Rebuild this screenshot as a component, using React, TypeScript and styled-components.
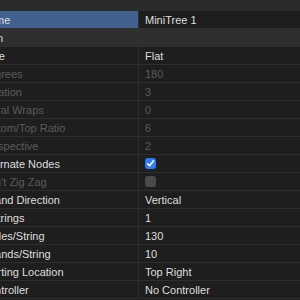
import React from "react";
import styled, { createGlobalStyle } from "styled-components";

const GlobalStyle = createGlobalStyle`
  html, body {
    margin: 0;
    padding: 0;
    background: #1e1e1e;
    overflow: hidden;
  }
  body {
    font-family: "Liberation Sans", Arial, sans-serif;
    font-size: 11px;
    -webkit-font-smoothing: antialiased;
  }
`;

type Prop = {
  label: string;
  value?: string;
  disabled?: boolean;
  check?: "on" | "off";
};

const props: Prop[] = [
  { label: "Type", value: "Flat" },
  { label: "Degrees", value: "180", disabled: true },
  { label: "Rotation", value: "3", disabled: true },
  { label: "Spiral Wraps", value: "0", disabled: true },
  { label: "Bottom/Top Ratio", value: "6", disabled: true },
  { label: "Perspective", value: "2", disabled: true },
  { label: "Alternate Nodes", check: "on" },
  { label: "Don't Zig Zag", check: "off", disabled: true },
  { label: "Strand Direction", value: "Vertical" },
  { label: "# Strings", value: "1" },
  { label: "Nodes/String", value: "130" },
  { label: "Strands/String", value: "10" },
  { label: "Starting Location", value: "Top Right" },
  { label: "Controller", value: "No Controller" },
];

const Grid = styled.div`
  width: 324px;
  margin-left: -24px;
  display: flex;
  flex-direction: column;
`;

const TopStrip = styled.div`
  height: 11px;
  background: #2b2b2b;
`;

const Row = styled.div`
  height: 18px;
  box-sizing: border-box;
  display: grid;
  grid-template-columns: 162px 1fr;
  border-bottom: 1px solid #2e2e2e;
`;

const Label = styled.div<{ $selected?: boolean; $disabled?: boolean }>`
  display: flex;
  align-items: center;
  padding-left: 5px;
  white-space: nowrap;
  overflow: hidden;
  background: ${(p) => (p.$selected ? "#41608e" : "#1e1e1e")};
  color: ${(p) => (p.$disabled ? "#5b5b5b" : "#dedede")};
`;

const Value = styled.div<{ $disabled?: boolean }>`
  display: flex;
  align-items: center;
  padding-left: 6px;
  border-left: 1px solid #2e2e2e;
  white-space: nowrap;
  overflow: hidden;
  background: #1e1e1e;
  color: ${(p) => (p.$disabled ? "#5b5b5b" : "#dedede")};
`;

const Category = styled.div`
  height: 18px;
  box-sizing: border-box;
  display: flex;
  align-items: center;
  padding-left: 0;
  background: #2f2f2f;
  color: #dedede;
  white-space: nowrap;
`;

const CategoryText = styled.span`
  margin-left: -7px;
`;

const Check = styled.span<{ $on: boolean }>`
  width: 11px;
  height: 11px;
  border-radius: 3px;
  display: flex;
  align-items: center;
  justify-content: center;
  background: ${(p) => (p.$on ? "#2f7df3" : "#4a4a4a")};
`;

function PropRow({ label, value, disabled, check }: Prop) {
  return (
    <Row>
      <Label $disabled={disabled}>{label}</Label>
      <Value $disabled={disabled}>
        {check ? (
          <Check $on={check === "on"}>
            {check === "on" && (
              <svg width="9" height="9" viewBox="0 0 9 9">
                <path
                  d="M1.6 4.7 L3.6 6.8 L7.5 1.8"
                  fill="none"
                  stroke="#fff"
                  strokeWidth="1.5"
                  strokeLinecap="round"
                  strokeLinejoin="round"
                />
              </svg>
            )}
          </Check>
        ) : (
          value
        )}
      </Value>
    </Row>
  );
}

export default function App() {
  return (
    <>
      <GlobalStyle />
      <Grid>
        <TopStrip />
        <Row>
          <Label $selected>Name</Label>
          <Value>MiniTree 1</Value>
        </Row>
        <Category>
          <CategoryText>Design</CategoryText>
        </Category>
        {props.map((p) => (
          <PropRow key={p.label} {...p} />
        ))}
      </Grid>
    </>
  );
}
